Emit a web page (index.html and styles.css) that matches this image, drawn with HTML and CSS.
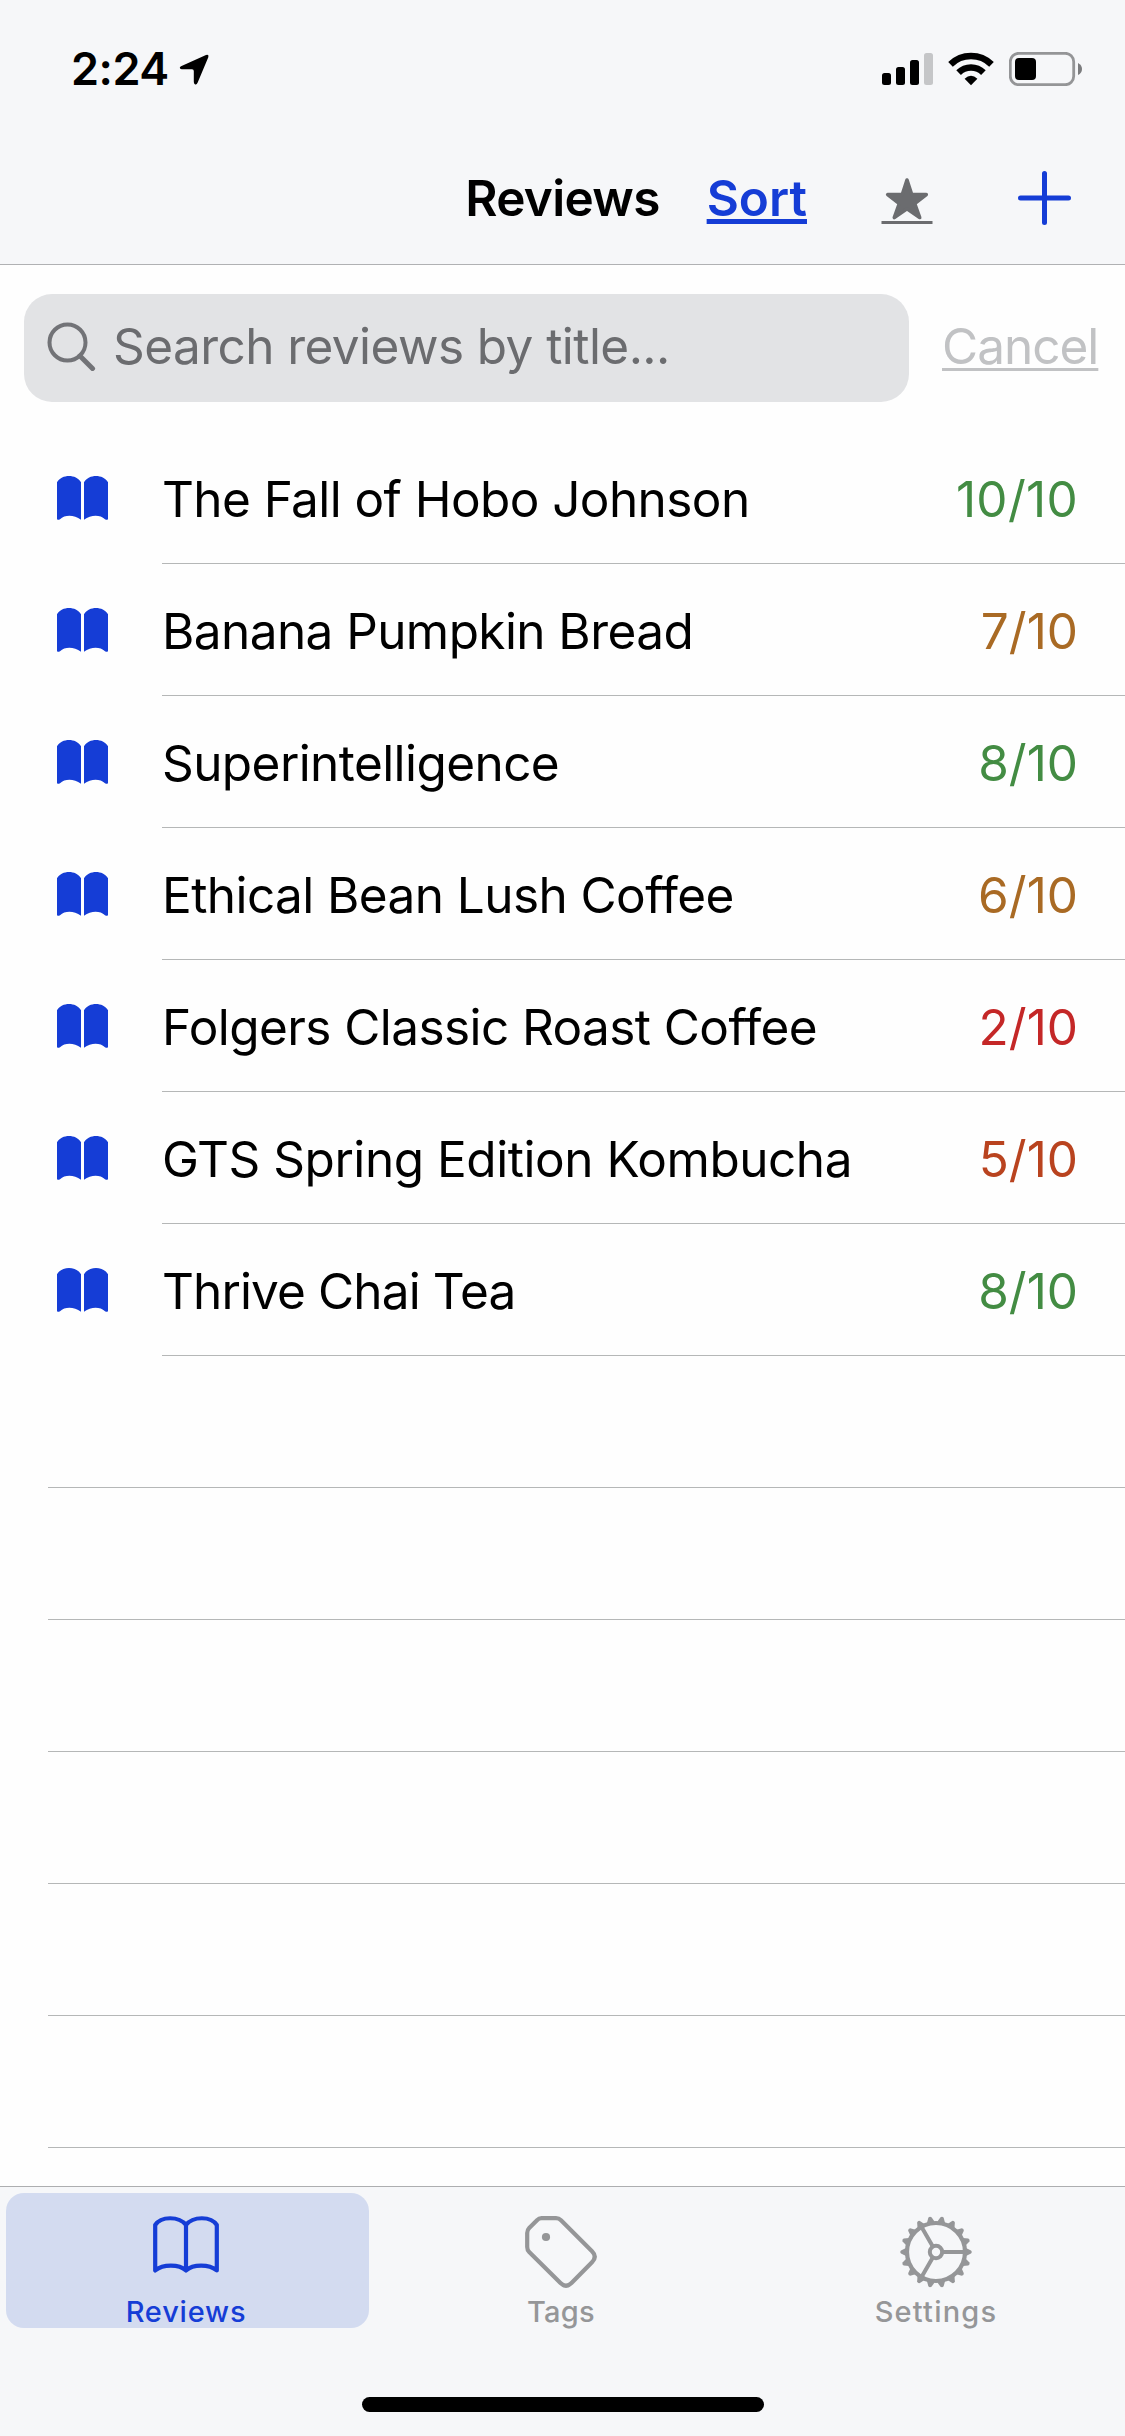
FILE: index.html
```html
<!DOCTYPE html>
<html lang="en">
<head>
<meta charset="utf-8">
<title>Reviews</title>
<link rel="stylesheet" href="styles.css">
</head>
<body>
<svg width="0" height="0" class="defs" aria-hidden="true">
  <symbol id="book" viewBox="0 0 51 44">
    <path d="M0 6.2C5-2 19-2 24 6.2V43.8C17 38.6 8 38.6 3 43.2Q.8 44.6 0 43Z"/>
    <path d="M27 6.2C32-2 46-2 51 6.2V43Q50.200 44.600 48 43.200C43 38.600 34 38.600 27 43.800Z"/>
  </symbol>
</svg>
<div class="screen">
  <header class="header">
    <div class="status">
      <div class="status-left">
        <span class="time">2:24</span>
        <svg class="locate" width="31" height="33" viewBox="0 0 31 33"><path d="M2 13.200L27 2Q30.300 .8 29.300 4.200L18.700 29.500Q17.500 32.500 15.600 31Q14.800 30.200 14.800 28.500V18Q14.800 16.300 13 16.300H3Q1.200 16.200 .8 14.700Q.8 13.700 2 13.200Z"/></svg>
      </div>
      <div class="status-right">
        <svg width="51" height="32" viewBox="0 0 51 32"><rect y="20" width="9" height="12" rx="2.500"/><rect x="14" y="14" width="9" height="18" rx="2.500"/><rect x="28" y="7" width="9" height="25" rx="2.500"/><rect x="42" width="9" height="32" rx="2.500" fill="#c5c6c8"/></svg>
        <svg class="wifi" width="46" height="34" viewBox="0 0 46 34"><g fill="none" stroke="#000" stroke-width="6.600"><path d="M2.500 12.300A29.400 29.400 0 0 1 43.500 12.300"/><path d="M10.600 20.600A17.700 17.700 0 0 1 35.400 20.600"/></g><path d="M16.600 26.700Q23 20.800 29.400 26.700L23 33.200Z"/></svg>
        <svg class="battery" width="74" height="34" viewBox="0 0 74 34"><rect x="1.300" y="1.300" width="63.400" height="31.400" rx="8.500" fill="none" stroke="#949597" stroke-width="2.800"/><rect x="6" y="6" width="21" height="22" rx="4"/><path d="M69 11Q73 13 73 17T69 23Z" fill="#7b7c7e"/></svg>
      </div>
    </div>
    <div class="nav">
      <h1 class="title">Reviews</h1>
      <a class="sort">Sort</a>
      <svg class="star" width="52" height="48" viewBox="0 0 52 48"><path d="M26 3L30.700 17.500H45.300L33.700 26.500L38.700 40.500L26 31.800L13.300 40.500L18.300 26.500L6.700 17.500H21.300Z" fill="#6b6c6f" stroke="#6b6c6f" stroke-width="3.600" stroke-linejoin="round"/><path d="M.5 45.500H51.500" stroke="#6b6c6f" stroke-width="3"/></svg>
      <svg class="plus" width="53" height="54" viewBox="0 0 53 54"><path d="M26.500 2.500V51.500M2.500 27H50.500" stroke="#153dd6" stroke-width="5" stroke-linecap="round"/></svg>
    </div>
  </header>
  <main class="content">
    <div class="search">
      <div class="field">
        <svg width="49" height="50" viewBox="0 0 49 50"><g fill="none" stroke="#727377"><circle cx="20.500" cy="21.500" r="18" stroke-width="4"/><path d="M33 35L45.500 47.500" stroke-width="5" stroke-linecap="round"/></g></svg>
        <span class="placeholder">Search reviews by title...</span>
      </div>
      <a class="cancel">Cancel</a>
    </div>
    <ul class="list">
      <li class="row"><svg class="icon"><use href="#book"/></svg><div class="cell"><span class="name">The Fall of Hobo Johnson</span><span class="score good wide">10/10</span></div></li>
      <li class="row"><svg class="icon"><use href="#book"/></svg><div class="cell"><span class="name">Banana Pumpkin Bread</span><span class="score fair">7/10</span></div></li>
      <li class="row"><svg class="icon"><use href="#book"/></svg><div class="cell"><span class="name">Superintelligence</span><span class="score good">8/10</span></div></li>
      <li class="row"><svg class="icon"><use href="#book"/></svg><div class="cell"><span class="name">Ethical Bean Lush Coffee</span><span class="score fair">6/10</span></div></li>
      <li class="row"><svg class="icon"><use href="#book"/></svg><div class="cell"><span class="name">Folgers Classic Roast Coffee</span><span class="score bad">2/10</span></div></li>
      <li class="row"><svg class="icon"><use href="#book"/></svg><div class="cell"><span class="name loose">GTS Spring Edition Kombucha</span><span class="score poor">5/10</span></div></li>
      <li class="row"><svg class="icon"><use href="#book"/></svg><div class="cell"><span class="name tight">Thrive Chai Tea</span><span class="score good">8/10</span></div></li>
      <li class="empty"></li>
      <li class="empty"></li>
      <li class="empty"></li>
      <li class="empty"></li>
      <li class="empty"></li>
      <li class="empty"></li>
    </ul>
  </main>
  <footer class="footer">
    <nav class="tabs">
      <a class="tab active">
        <svg width="66" height="72" viewBox="0 0 66 72"><path d="M2.200 9C8 0 26 0 33 9C40 0 58 0 63.800 9V54.500C56 48 40 48 33 54.500C26 48 10 48 2.200 54.500ZM33 9V54.500" fill="none" stroke="#153dd6" stroke-width="4.200" stroke-linejoin="round"/></svg>
        <span class="label l-reviews">Reviews</span>
      </a>
      <a class="tab">
        <svg width="72" height="72" viewBox="0 0 72 72"><path d="M16.500 2.200H31q3 0 5 2L67 35.300q5.500 5.500 0 11L46.500 67q-5.500 5.500-11 0L4.200 36q-2-2-2-5V17q0-3 2-5L12 4.200q2-2 4.500-2z" fill="none" stroke="#959698" stroke-width="4.200"/><circle cx="21" cy="21" r="4.100" fill="#959698"/></svg>
        <span class="label l-tags">Tags</span>
      </a>
      <a class="tab">
        <svg width="72" height="72" viewBox="-36 -36 72 72">
          <defs>
            <path id="t" d="M30 -4L35 -1.600Q36.500 0 35 1.600L30 4Z"/>
            <g id="t3"><use href="#t"/><use href="#t" transform="rotate(20)"/><use href="#t" transform="rotate(40)"/></g>
          </defs>
          <g fill="#959698"><use href="#t3"/><use href="#t3" transform="rotate(60)"/><use href="#t3" transform="rotate(120)"/><use href="#t3" transform="rotate(180)"/><use href="#t3" transform="rotate(240)"/><use href="#t3" transform="rotate(300)"/></g>
          <g fill="none" stroke="#959698" stroke-width="4"><circle r="29" stroke-width="4.200"/><circle r="6.200"/><path d="M7 0H28M-3.500 -6.060L-14 -24.250M-3.500 6.060L-14 24.250"/></g>
        </svg>
        <span class="label l-settings">Settings</span>
      </a>
    </nav>
    <div class="home"></div>
  </footer>
</div>
</body>
</html>
```
FILE: styles.css
```css
* { box-sizing: border-box; }

body {
  margin: 0;
  font-family: Inter, "Liberation Sans", sans-serif;
  color: #000;
}

svg { display: block; flex: none; }
.defs { position: absolute; }

.screen {
  width: 1125px;
  height: 2436px;
  display: flex;
  flex-direction: column;
  background: #fefefe;
  overflow: hidden;
}

/* Header */
.header {
  flex: none;
  height: 265px;
  background: #f6f7f9;
  border-bottom: 1px solid #b0b1b3;
}

.status {
  height: 138px;
  display: flex;
  justify-content: space-between;
  align-items: center;
  padding: 0 42px 0 71px;
}

.status-left, .status-right { display: flex; align-items: center; }
.time { padding-bottom: 2px; font-size: 45px; font-weight: 600; letter-spacing: -0.5px; }
.locate { margin-left: 10px; }
.wifi { margin-left: 15px; }
.battery { margin-left: 15px; }

.nav {
  height: 120px;
  display: flex;
  justify-content: flex-end;
  align-items: center;
  padding-right: 54px;
  font-size: 49.5px;
  font-weight: 600;
}

.title {
  margin: 0 47px 0 0;
  font-size: inherit;
  font-weight: 600;
  letter-spacing: -0.7px;
}

.sort {
  color: #153dd6;
  text-decoration: underline;
  text-decoration-thickness: 5px;
  text-underline-offset: 3px;
  text-decoration-skip-ink: none;
}

.star { margin: 5px 85px 0 74px; }

/* Search */
.content { flex: 1; min-height: 0; overflow: hidden; }

.search {
  height: 167px;
  display: flex;
  align-items: center;
  gap: 33px;
  padding: 0 24px 1px;
  font-size: 49.5px;
}

.field {
  width: 885px;
  height: 108px;
  display: flex;
  align-items: center;
  gap: 17px;
  padding: 0 0 4px 23px;
  border-radius: 28px;
  background: #e2e3e5;
  color: #6b6c6f;
}

.placeholder { letter-spacing: -0.56px; }

.cancel {
  padding-bottom: 5px;
  color: #c1c2c4;
  letter-spacing: -1px;
  text-decoration: underline;
  text-decoration-thickness: 3px;
  text-underline-offset: 4px;
  text-decoration-skip-ink: none;
}

/* Reviews */
.list { margin: 0; padding: 0; list-style: none; font-size: 49.5px; }
.row { height: 132px; display: flex; align-items: center; padding-left: 57px; }
.icon { width: 51px; height: 44px; fill: #153dd6; }

.cell {
  flex: 1;
  height: 132px;
  display: flex;
  justify-content: space-between;
  align-items: center;
  margin-left: 54px;
  padding: 3px 47px 0 0;
  border-bottom: 1px solid #b5b7b7;
}

.name { letter-spacing: -0.58px; }
.tight { letter-spacing: -0.88px; }
.loose { letter-spacing: -0.46px; }
.wide { letter-spacing: 0.3px; }
.good { color: #438c43; }
.fair { color: #a96a24; }
.poor { color: #b9431f; }
.bad { color: #c42727; }

.empty { height: 132px; margin-left: 48px; border-bottom: 1px solid #b5b7b7; }

/* Tab bar */
.footer {
  flex: none;
  height: 250px;
  background: #f6f7f9;
  border-top: 1px solid #adaeb0;
}

.tabs { display: grid; grid-template-columns: repeat(3, 1fr); padding-top: 6px; }

.tab {
  height: 135px;
  display: flex;
  flex-direction: column;
  align-items: center;
  margin: 0 6px;
  padding: 23px 3px 0 0;
  border-radius: 18px;
  color: #959698;
}

.active { background: #d3dbf0; color: #153dd6; }

.label { margin-top: 5px; font-size: 29px; font-weight: 500; line-height: 38px; }
.l-reviews { letter-spacing: 0.8px; }
.l-tags { letter-spacing: 0.3px; }
.l-settings { letter-spacing: 1.2px; }

.home {
  width: 402px;
  height: 15px;
  margin: 69px auto 0;
  border-radius: 8px;
  background: #000;
}
```
